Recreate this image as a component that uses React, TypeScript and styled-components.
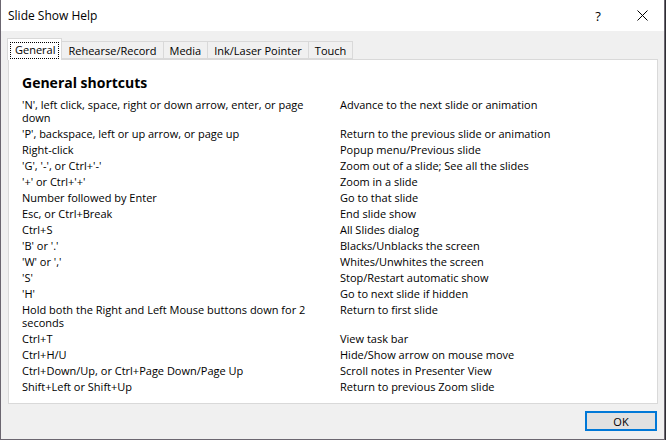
import styled, { createGlobalStyle } from "styled-components";

const GlobalStyle = createGlobalStyle`
  html, body {
    margin: 0;
    padding: 0;
    background: #2e2e33;
  }
  body {
    font-family: "Open Sans", "Noto Sans", sans-serif;
    font-size: 11px;
    color: #000;
  }
`;

interface Shortcut {
  keys: string;
  action: string;
}

const shortcuts: Shortcut[] = [
  { keys: "'N', left click, space, right or down arrow, enter, or page down", action: "Advance to the next slide or animation" },
  { keys: "'P', backspace, left or up arrow, or page up", action: "Return to the previous slide or animation" },
  { keys: "Right-click", action: "Popup menu/Previous slide" },
  { keys: "'G', '-', or Ctrl+'-'", action: "Zoom out of a slide; See all the slides" },
  { keys: "'+' or Ctrl+'+'", action: "Zoom in a slide" },
  { keys: "Number followed by Enter", action: "Go to that slide" },
  { keys: "Esc, or Ctrl+Break", action: "End slide show" },
  { keys: "Ctrl+S", action: "All Slides dialog" },
  { keys: "'B' or '.'", action: "Blacks/Unblacks the screen" },
  { keys: "'W' or ','", action: "Whites/Unwhites the screen" },
  { keys: "'S'", action: "Stop/Restart automatic show" },
  { keys: "'H'", action: "Go to next slide if hidden" },
  { keys: "Hold both the Right and Left Mouse buttons down for 2 seconds", action: "Return to first slide" },
  { keys: "Ctrl+T", action: "View task bar" },
  { keys: "Ctrl+H/U", action: "Hide/Show arrow on mouse move" },
  { keys: "Ctrl+Down/Up, or Ctrl+Page Down/Page Up", action: "Scroll notes in Presenter View" },
  { keys: "Shift+Left or Shift+Up", action: "Return to previous Zoom slide" },
];

const tabs = ["General", "Rehearse/Record", "Media", "Ink/Laser Pointer", "Touch"];

export default function App() {
  return (
    <>
      <GlobalStyle />
      <Window>
        <TitleBar>
          <Title>Slide Show Help</Title>
          <CaptionButton type="button">?</CaptionButton>
          <CaptionButton type="button">
            <svg width="11" height="11" viewBox="0 0 11 11">
              <path d="M0.5 0.5 L10.5 10.5 M10.5 0.5 L0.5 10.5" stroke="#000" strokeWidth="1" fill="none" />
            </svg>
          </CaptionButton>
        </TitleBar>
        <Body>
          <TabStrip>
            {tabs.map((t, i) => (
              <Tab key={t} $active={i === 0}>
                {i === 0 ? <FocusLabel>{t}</FocusLabel> : t}
              </Tab>
            ))}
          </TabStrip>
          <Panel>
            <Heading>General shortcuts</Heading>
            <ShortcutGrid>
              {shortcuts.map((s) => (
                <Row key={s.keys}>
                  <Keys>{s.keys}</Keys>
                  <Action>{s.action}</Action>
                </Row>
              ))}
            </ShortcutGrid>
          </Panel>
          <Footer>
            <OkButton type="button">OK</OkButton>
          </Footer>
        </Body>
      </Window>
    </>
  );
}

const Window = styled.div`
  width: 665px;
  height: 440px;
  box-sizing: border-box;
  border: 1px solid #6b6670;
  border-top: none;
  background: #f0f0f0;
  display: flex;
  flex-direction: column;
`;

const TitleBar = styled.div`
  height: 31px;
  background: #fff;
  display: flex;
  align-items: center;
  padding-left: 7px;
`;

const Title = styled.div`
  flex: 1;
  font-size: 12px;
  padding-bottom: 1px;
`;

const CaptionButton = styled.button`
  width: 44px;
  height: 31px;
  border: none;
  background: transparent;
  padding: 0;
  display: flex;
  align-items: center;
  justify-content: center;
  font-family: "Open Sans", sans-serif;
  font-size: 13px;
  color: #000;
`;

const Body = styled.div`
  flex: 1;
  display: flex;
  flex-direction: column;
  padding: 7px 6px 0 6px;
`;

const TabStrip = styled.div`
  display: flex;
  align-items: flex-end;
  height: 21px;
  position: relative;
  z-index: 1;
`;

const Tab = styled.div<{ $active?: boolean }>`
  box-sizing: border-box;
  height: ${({ $active }) => ($active ? "22px" : "18px")};
  margin-bottom: ${({ $active }) => ($active ? "-1px" : "0")};
  padding: 0 ${({ $active }) => ($active ? "2px" : "6px")};
  border: 1px solid #d9d9d9;
  border-bottom: ${({ $active }) => ($active ? "none" : "1px solid #d9d9d9")};
  border-left: ${({ $active }) => ($active ? "1px solid #d9d9d9" : "none")};
  background: ${({ $active }) => ($active ? "#fff" : "#f0f0f0")};
  display: flex;
  align-items: ${({ $active }) => ($active ? "flex-start" : "center")};
  padding-top: ${({ $active }) => ($active ? "3px" : "0")};
  white-space: nowrap;
`;

const FocusLabel = styled.span`
  border: 1px dotted #000;
  padding: 0 3px 1px 4px;
  line-height: 14px;
`;

const Panel = styled.div`
  box-sizing: border-box;
  height: 345px;
  margin-left: 1px;
  background: #fff;
  border: 1px solid #d9d9d9;
  padding: 13px 13px 0 13px;
`;

const Heading = styled.h2`
  margin: 0 0 5px 0;
  font-size: 14px;
  font-weight: 700;
  line-height: 20px;
`;

const ShortcutGrid = styled.div`
  display: flex;
  flex-direction: column;
  gap: 3px;
`;

const Row = styled.div`
  display: grid;
  grid-template-columns: 318px 1fr;
  line-height: 13px;
`;

const Keys = styled.div`
  padding-right: 20px;
`;

const Action = styled.div``;

const Footer = styled.div`
  display: flex;
  justify-content: flex-end;
  padding-top: 7px;
`;

const OkButton = styled.button`
  box-sizing: border-box;
  width: 72px;
  height: 20px;
  margin-right: 1px;
  border: 2px solid #0078d7;
  background: #e1e1e1;
  font-family: "Open Sans", sans-serif;
  font-size: 11px;
  color: #000;
  padding: 0;
`;
